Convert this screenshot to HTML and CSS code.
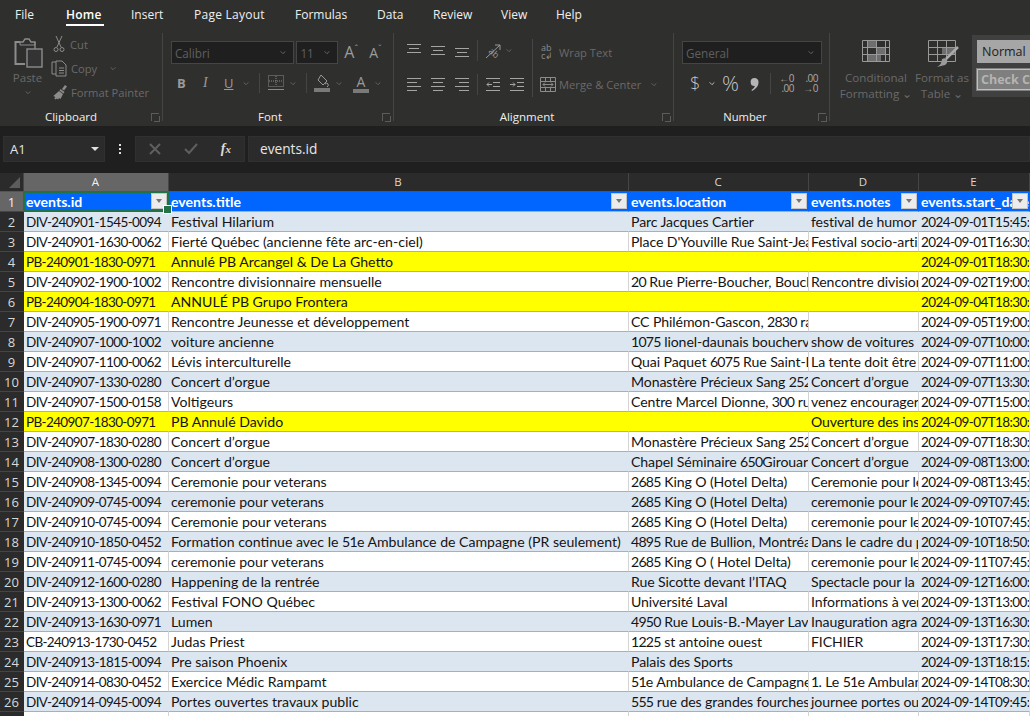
FILE: index.html
```html
<!DOCTYPE html>
<html lang="fr">
<head>
<meta charset="utf-8">
<title>events.xlsx</title>
<link rel="stylesheet" href="styles.css">
</head>
<body>
<div class="app">
  <nav class="tabs">
    <span class="tab t-file">File</span>
    <span class="tab t-home active">Home</span>
    <span class="tab t-insert">Insert</span>
    <span class="tab t-page">Page Layout</span>
    <span class="tab t-formulas">Formulas</span>
    <span class="tab t-data">Data</span>
    <span class="tab t-review">Review</span>
    <span class="tab t-view">View</span>
    <span class="tab t-help">Help</span>
  </nav>

  <section class="ribbon">
    <!-- Clipboard -->
    <div class="group g-clip">
      <div class="group-body clip-body">
        <div class="paste">
          <svg class="i-paste" width="30" height="32" viewBox="0 0 30 32" fill="none" stroke="#8c8c8c" stroke-width="1.4"><path d="M6 5H1.500v22H11" stroke-width="2"/><path d="M6 5h3l2-3h4l2 3h4v7"/><path d="M6 5v3h15V5" stroke-width="1"/><rect x="13" y="12" width="15" height="18" fill="#333"/></svg>
          <span class="dim">Paste</span>
          <svg class="chev" width="8" height="5" viewBox="0 0 8 5"><path d="M1 1l3 3 3-3" fill="none" stroke="#6f6f6f"/></svg>
        </div>
        <div class="clip-list">
          <div class="clip-row"><svg width="16" height="18" viewBox="0 0 16 18" fill="none" stroke="#8c8c8c"><path d="M5 1l5 11M11 1L6 12"/><circle cx="5" cy="14.500" r="2"/><circle cx="11" cy="14.500" r="2"/></svg><span class="dim">Cut</span></div>
          <div class="clip-row"><svg width="17" height="17" viewBox="0 0 17 17" fill="none" stroke="#8c8c8c"><path d="M5 2H1v12h4"/><path d="M5 1h6l4 4v11H5zM8 8h5M8 10.500h5M8 13h5"/></svg><span class="dim">Copy</span><svg class="chev c-copy" width="8" height="5" viewBox="0 0 8 5"><path d="M1 1l3 3 3-3" fill="none" stroke="#6f6f6f"/></svg></div>
          <div class="clip-row"><svg width="17" height="17" viewBox="0 0 17 17" fill="#8c8c8c"><path d="M11 5l3-4 2 1.500-3 4zM9.500 5l4 3-1 1.500-4-3zM8 7l4 3-2.500 5-1.500-1-.8 1.500-1.500-1-.9 1-1.500-1 1-1.500-2-1z"/></svg><span class="dim">Format Painter</span></div>
        </div>
      </div>
      <footer class="group-label l-clip">Clipboard<i class="launcher"></i></footer>
    </div>

    <!-- Font -->
    <div class="group g-font">
      <div class="group-body rows">
        <div class="row r-top">
          <div class="combo c-font"><span>Calibri</span><svg class="chev" width="8" height="5" viewBox="0 0 8 5"><path d="M1 1l3 3 3-3" fill="none" stroke="#777"/></svg></div>
          <div class="combo c-size"><span>11</span><svg class="chev" width="8" height="5" viewBox="0 0 8 5"><path d="M1 1l3 3 3-3" fill="none" stroke="#777"/></svg></div>
          <span class="grow-a">A<sup>ˆ</sup></span>
          <span class="grow-a small-a">A<sup>ˇ</sup></span>
        </div>
        <div class="row r-fmt">
          <b class="f-b">B</b><i class="f-i">I</i><u class="f-u">U</u>
          <svg class="chev c-u" width="8" height="5" viewBox="0 0 8 5"><path d="M1 1l3 3 3-3" fill="none" stroke="#6f6f6f"/></svg>
          <span class="vsep v-a"></span>
          <svg class="i-border" width="16" height="16" viewBox="0 0 16 16" fill="none" stroke="#8a8a8a"><path stroke-dasharray="1 1" d="M.5.500h15v11H.5zM8 1v10M1 6h14"/><path d="M0 14.500h16"/></svg>
          <svg class="chev c-b" width="8" height="5" viewBox="0 0 8 5"><path d="M1 1l3 3 3-3" fill="none" stroke="#6f6f6f"/></svg>
          <span class="vsep v-b"></span>
          <svg class="i-fill" width="16" height="18" viewBox="0 0 16 18"><path d="M7 1l6 6-4 4-5-5z" fill="none" stroke="#999"/><path d="M11 10q2-2 3 0t-1 3" fill="none" stroke="#999"/><rect y="14" width="16" height="4" fill="#7a7a7a"/></svg>
          <svg class="chev c-f" width="8" height="5" viewBox="0 0 8 5"><path d="M1 1l3 3 3-3" fill="none" stroke="#6f6f6f"/></svg>
          <span class="a-color">A</span>
          <svg class="chev c-a" width="8" height="5" viewBox="0 0 8 5"><path d="M1 1l3 3 3-3" fill="none" stroke="#6f6f6f"/></svg>
        </div>
      </div>
      <footer class="group-label l-font">Font<i class="launcher"></i></footer>
    </div>

    <!-- Alignment -->
    <div class="group g-align">
      <div class="group-body align-body">
        <div class="align-col">
          <div class="row align-row">
            <svg width="14" height="14" viewBox="0 0 14 14" stroke="#a5a5a5"><path d="M0 1.500h14M2 5.500h10M0 9.500h14"/></svg>
            <svg class="mid" width="14" height="14" viewBox="0 0 14 14" stroke="#a5a5a5"><path d="M0 3.500h14M2 7.500h10M0 11.500h14"/></svg>
            <svg class="mid low" width="14" height="14" viewBox="0 0 14 14" stroke="#a5a5a5"><path d="M0 5.500h14M2 9.500h10M0 13.500h14"/></svg>
            <span class="vsep v-c"></span>
            <svg class="i-orient" width="17" height="17" viewBox="0 0 17 17" fill="none" stroke="#9a9a9a"><text class="orient-t" x="0" y="0" transform="translate(3 10) rotate(40)">ab</text><path d="M1 16L15 3M10 3h5v5"/></svg>
            <svg class="chev c-o" width="8" height="5" viewBox="0 0 8 5"><path d="M1 1l3 3 3-3" fill="none" stroke="#6f6f6f"/></svg>
          </div>
          <div class="row align-row r-2">
            <svg width="14" height="14" viewBox="0 0 14 14" stroke="#a5a5a5"><path d="M0 1.500h14M0 5.500h10M0 9.500h14M0 13.500h10"/></svg>
            <svg class="mid" width="14" height="14" viewBox="0 0 14 14" stroke="#a5a5a5"><path d="M0 1.500h14M2 5.500h10M0 9.500h14M2 13.500h10"/></svg>
            <svg class="mid" width="14" height="14" viewBox="0 0 14 14" stroke="#a5a5a5"><path d="M0 1.500h14M4 5.500h10M0 9.500h14M4 13.500h10"/></svg>
            <span class="vsep v-c"></span>
            <svg class="i-ind" width="14" height="14" viewBox="0 0 14 14" fill="none" stroke="#a5a5a5"><path d="M0 1.500h14M7 5.500h7M7 9.500h7M0 13.500h14M1 7.500h5M3 5.500L1 7.500l2 2"/></svg>
            <svg class="i-ind2" width="14" height="14" viewBox="0 0 14 14" fill="none" stroke="#a5a5a5"><path d="M0 1.500h14M7 5.500h7M7 9.500h7M0 13.500h14M0 7.500h5M3 5.500l2 2-2 2"/></svg>
          </div>
        </div>
        <span class="vsep v-d"></span>
        <div class="wrap-col">
          <div class="clip-row w-row"><span class="abc">ab<br>c↲</span><span class="dim">Wrap Text</span></div>
          <div class="clip-row m-row"><svg width="16" height="16" viewBox="0 0 16 16" fill="none" stroke="#8c8c8c"><path d="M.5 1.500h15v14H.5zM.5 5.500h15M.5 11.500h15M5.500 1.500v4M10.500 1.500v4M5.500 11.500v4M10.500 11.500v4M3 8.500h10M5 6.500l-2 2 2 2M11 6.500l2 2-2 2"/></svg><span class="dim">Merge &amp; Center</span><svg class="chev c-m" width="8" height="5" viewBox="0 0 8 5"><path d="M1 1l3 3 3-3" fill="none" stroke="#6f6f6f"/></svg></div>
        </div>
      </div>
      <footer class="group-label l-align">Alignment<i class="launcher"></i></footer>
    </div>

    <!-- Number -->
    <div class="group g-num">
      <div class="group-body rows">
        <div class="row r-top"><div class="combo c-gen"><span>General</span><svg class="chev" width="8" height="5" viewBox="0 0 8 5"><path d="M1 1l3 3 3-3" fill="none" stroke="#777"/></svg></div></div>
        <div class="row r-num">
          <span class="n-dollar">$</span>
          <svg class="chev c-d" width="8" height="5" viewBox="0 0 8 5"><path d="M1 1l3 3 3-3" fill="none" stroke="#ddd"/></svg>
          <span class="n-pct">%</span>
          <svg class="n-comma" width="9" height="13" viewBox="0 0 9 13" fill="#b5b5b5"><path d="M4.500 0a4 4 0 0 1 4 4.500C8.500 8 6 11 2 13l-.6-1C3.500 10.500 4.500 9.300 4.800 8a3.800 3.800 0 1 1-.3-8z"/></svg>
          <span class="vsep v-n"></span>
          <span class="n-dec"><span>←0</span><span>.00</span></span>
          <span class="n-dec n-dec2"><span>.00</span><span>→0</span></span>
        </div>
      </div>
      <footer class="group-label l-num">Number<i class="launcher"></i></footer>
    </div>

    <!-- Styles -->
    <div class="g-styles">
      <div class="style-btn s-cond">
        <svg width="28" height="22" viewBox="0 0 28 22" fill="none" stroke="#999"><rect x="5" y="1" width="9" height="6" fill="#6e6e6e" stroke="none"/><rect x="14" y="7" width="9" height="7" fill="#6e6e6e" stroke="none"/><rect x="5" y="14" width="14" height="7" fill="#6e6e6e" stroke="none"/><path d="M.5.500h27v21H.5zM.5 7.500h27M.5 14.500h27M5.500 0v22M14.500 0v22M23.500 0v22"/></svg>
        <span class="dim">Conditional</span>
        <span class="dim">Formatting ⌄</span>
      </div>
      <div class="style-btn s-table">
        <svg width="31" height="28" viewBox="0 0 31 28" fill="none" stroke="#999"><rect x="14" y="8" width="13" height="7" fill="#6e6e6e" stroke="none"/><path d="M.5.500h27v21H.5zM.5 7.500h27M.5 14.500h27M9.500 0v22M18.500 0v22"/><path d="M30 7L18 19" stroke="#aaa" stroke-width="2.500"/><path d="M14 19q4-2 5 1t-2 5l-8 2q5-3 5-8z" fill="#9a9a9a" stroke="none"/></svg>
        <span class="dim">Format as</span>
        <span class="dim">Table ⌄</span>
      </div>
      <div class="gallery">
        <div class="st-normal">Normal</div>
        <div class="st-check">Check Cell</div>
      </div>
    </div>
  </section>

  <div class="strip"></div>

  <section class="formula-bar">
    <div class="namebox"><span>A1</span><i class="tri"></i></div>
    <div class="dots"><i></i><i></i><i></i></div>
    <div class="fx-btns">
      <svg width="14" height="12" viewBox="0 0 14 12" stroke="#5f5f5f" stroke-width="2"><path d="M2 1l10 10M12 1L2 11"/></svg>
      <svg width="14" height="12" viewBox="0 0 14 12" fill="none" stroke="#5f5f5f" stroke-width="2"><path d="M1 6l4 4 8-9"/></svg>
      <span class="fx">f<small>x</small></span>
    </div>
    <div class="formula">events.id</div>
  </section>

  <div class="strip2"></div>

  <section class="sheet">
    <table class="grid">
      <colgroup><col class="w-h"><col class="w-a"><col class="w-b"><col class="w-c"><col class="w-d"><col class="w-e"></colgroup>
      <thead>
        <tr class="cols">
          <th class="corner"><i></i></th><th class="cur">A</th><th>B</th><th>C</th><th>D</th><th>E</th>
        </tr>
      </thead>
      <tbody>
        <tr class="head">
          <th class="cur">1</th>
          <td class="sel"><div class="c">events.id</div><i class="fb"></i><i class="sel-box"></i></td>
          <td><div class="c">events.title</div><i class="fb"></i></td>
          <td><div class="c">events.location</div><i class="fb"></i></td>
          <td><div class="c">events.notes</div><i class="fb"></i></td>
          <td><div class="c">events.start_date</div><i class="fb"></i></td>
        </tr>
        <tr class="b"><th>2</th><td><div class="c">DIV-240901-1545-0094</div></td><td><div class="c">Festival Hilarium</div></td><td><div class="c">Parc Jacques Cartier</div></td><td><div class="c">festival de humor</div></td><td><div class="c">2024-09-01T15:45:00</div></td></tr>
        <tr><th>3</th><td><div class="c">DIV-240901-1630-0062</div></td><td><div class="c">Fierté Québec (ancienne fête arc-en-ciel)</div></td><td><div class="c">Place D'Youville Rue Saint-Jean</div></td><td><div class="c">Festival socio-artistique</div></td><td><div class="c">2024-09-01T16:30:00</div></td></tr>
        <tr class="y"><th>4</th><td><div class="c">PB-240901-1830-0971</div></td><td><div class="c">Annulé PB Arcangel &amp; De La Ghetto</div></td><td></td><td></td><td><div class="c">2024-09-01T18:30:00</div></td></tr>
        <tr><th>5</th><td><div class="c">DIV-240902-1900-1002</div></td><td><div class="c">Rencontre divisionnaire mensuelle</div></td><td><div class="c"><span class="n">20</span> Rue Pierre-Boucher, Boucherville</div></td><td><div class="c">Rencontre divisionnaire</div></td><td><div class="c">2024-09-02T19:00:00</div></td></tr>
        <tr class="y"><th>6</th><td><div class="c">PB-240904-1830-0971</div></td><td><div class="c">ANNULÉ PB Grupo Frontera</div></td><td></td><td></td><td><div class="c">2024-09-04T18:30:00</div></td></tr>
        <tr><th>7</th><td><div class="c">DIV-240905-1900-0971</div></td><td><div class="c">Rencontre Jeunesse et développement</div></td><td><div class="c">CC Philémon-Gascon, <span class="n">2830</span> rang</div></td><td></td><td><div class="c">2024-09-05T19:00:00</div></td></tr>
        <tr class="b"><th>8</th><td><div class="c">DIV-240907-1000-1002</div></td><td><div class="c">voiture ancienne</div></td><td><div class="c"><span class="n">1075</span> lionel-daunais boucherville</div></td><td><div class="c">show de voitures</div></td><td><div class="c">2024-09-07T10:00:00</div></td></tr>
        <tr><th>9</th><td><div class="c">DIV-240907-1100-0062</div></td><td><div class="c">Lévis interculturelle</div></td><td><div class="c">Quai Paquet <span class="n">6075</span> Rue Saint-Laurent</div></td><td><div class="c">La tente doit être</div></td><td><div class="c">2024-09-07T11:00:00</div></td></tr>
        <tr class="b"><th>10</th><td><div class="c">DIV-240907-1330-0280</div></td><td><div class="c">Concert d’orgue</div></td><td><div class="c">Monastère Précieux Sang <span class="n">2520</span></div></td><td><div class="c">Concert d’orgue</div></td><td><div class="c">2024-09-07T13:30:00</div></td></tr>
        <tr><th>11</th><td><div class="c">DIV-240907-1500-0158</div></td><td><div class="c">Voltigeurs</div></td><td><div class="c">Centre Marcel Dionne, <span class="n">300</span> rue</div></td><td><div class="c">venez encourager</div></td><td><div class="c">2024-09-07T15:00:00</div></td></tr>
        <tr class="y"><th>12</th><td><div class="c">PB-240907-1830-0971</div></td><td><div class="c">PB Annulé Davido</div></td><td></td><td><div class="c">Ouverture des inscriptions</div></td><td><div class="c">2024-09-07T18:30:00</div></td></tr>
        <tr><th>13</th><td><div class="c">DIV-240907-1830-0280</div></td><td><div class="c">Concert d’orgue</div></td><td><div class="c">Monastère Précieux Sang <span class="n">2520</span></div></td><td><div class="c">Concert d’orgue</div></td><td><div class="c">2024-09-07T18:30:00</div></td></tr>
        <tr class="b"><th>14</th><td><div class="c">DIV-240908-1300-0280</div></td><td><div class="c">Concert d’orgue</div></td><td><div class="c">Chapel Séminaire <span class="n">650</span>Girouard</div></td><td><div class="c">Concert d’orgue</div></td><td><div class="c">2024-09-08T13:00:00</div></td></tr>
        <tr><th>15</th><td><div class="c">DIV-240908-1345-0094</div></td><td><div class="c">Ceremonie pour veterans</div></td><td><div class="c"><span class="n">2685</span> King O (Hotel Delta)</div></td><td><div class="c">Ceremonie pour les</div></td><td><div class="c">2024-09-08T13:45:00</div></td></tr>
        <tr class="b"><th>16</th><td><div class="c">DIV-240909-0745-0094</div></td><td><div class="c">ceremonie pour veterans</div></td><td><div class="c"><span class="n">2685</span> King O (Hotel Delta)</div></td><td><div class="c">ceremonie pour les</div></td><td><div class="c">2024-09-09T07:45:00</div></td></tr>
        <tr><th>17</th><td><div class="c">DIV-240910-0745-0094</div></td><td><div class="c">Ceremonie pour veterans</div></td><td><div class="c"><span class="n">2685</span> King O (Hotel Delta)</div></td><td><div class="c">ceremonie pour les</div></td><td><div class="c">2024-09-10T07:45:00</div></td></tr>
        <tr class="b"><th>18</th><td><div class="c">DIV-240910-1850-0452</div></td><td><div class="c">Formation continue avec le <span class="n">51</span>e Ambulance de Campagne (PR seulement)</div></td><td><div class="c"><span class="n">4895</span> Rue de Bullion, Montréal</div></td><td><div class="c">Dans le cadre du plan</div></td><td><div class="c">2024-09-10T18:50:00</div></td></tr>
        <tr><th>19</th><td><div class="c">DIV-240911-0745-0094</div></td><td><div class="c">ceremonie pour veterans</div></td><td><div class="c"><span class="n">2685</span> King O ( Hotel Delta)</div></td><td><div class="c">ceremonie pour les</div></td><td><div class="c">2024-09-11T07:45:00</div></td></tr>
        <tr class="b"><th>20</th><td><div class="c">DIV-240912-1600-0280</div></td><td><div class="c">Happening de la rentrée</div></td><td><div class="c">Rue Sicotte devant l’ITAQ</div></td><td><div class="c">Spectacle pour la rentrée</div></td><td><div class="c">2024-09-12T16:00:00</div></td></tr>
        <tr><th>21</th><td><div class="c">DIV-240913-1300-0062</div></td><td><div class="c">Festival FONO Québec</div></td><td><div class="c">Université Laval</div></td><td><div class="c">Informations à venir</div></td><td><div class="c">2024-09-13T13:00:00</div></td></tr>
        <tr class="b"><th>22</th><td><div class="c">DIV-240913-1630-0971</div></td><td><div class="c">Lumen</div></td><td><div class="c"><span class="n">4950</span> Rue Louis-B.-Mayer Laval</div></td><td><div class="c">Inauguration agrandie</div></td><td><div class="c">2024-09-13T16:30:00</div></td></tr>
        <tr><th>23</th><td><div class="c">CB-240913-1730-0452</div></td><td><div class="c">Judas Priest</div></td><td><div class="c"><span class="n">1225</span> st antoine ouest</div></td><td><div class="c">FICHIER</div></td><td><div class="c">2024-09-13T17:30:00</div></td></tr>
        <tr class="b"><th>24</th><td><div class="c">DIV-240913-1815-0094</div></td><td><div class="c">Pre saison Phoenix</div></td><td><div class="c">Palais des Sports</div></td><td></td><td><div class="c">2024-09-13T18:15:00</div></td></tr>
        <tr><th>25</th><td><div class="c">DIV-240914-0830-0452</div></td><td><div class="c">Exercice Médic Rampamt</div></td><td><div class="c"><span class="n">51</span>e Ambulance de Campagne</div></td><td><div class="c"><span class="n">1</span>. Le <span class="n">51</span>e Ambulance</div></td><td><div class="c">2024-09-14T08:30:00</div></td></tr>
        <tr class="b"><th>26</th><td><div class="c">DIV-240914-0945-0094</div></td><td><div class="c">Portes ouvertes travaux public</div></td><td><div class="c"><span class="n">555</span> rue des grandes fourches</div></td><td><div class="c">journee portes ouvertes</div></td><td><div class="c">2024-09-14T09:45:00</div></td></tr>
        <tr><th></th><td></td><td></td><td></td><td></td><td></td></tr>
      </tbody>
    </table>
  </section>
</div>
</body>
</html>
```
FILE: styles.css
```css
* { box-sizing: border-box; }
html, body { margin: 0; padding: 0; }
body { width: 1030px; height: 716px; overflow: hidden; background: #262626; font-family: "Open Sans", "Noto Sans", sans-serif; }
.app { width: 1030px; height: 716px; overflow: hidden; display: flex; flex-direction: column; }

/* Tabs */
.tabs { height: 33px; background: #2f2f2e; display: flex; align-items: flex-start; padding-left: 15px; color: #efefef; font-size: 12px; }
.tab { height: 26px; line-height: 30px; white-space: nowrap; }
.tab.active { color: #fff; font-weight: 600; border-bottom: 2px solid #fff; letter-spacing: .2px; }
.t-file { width: 51px; }
.t-home { width: 38px; margin-right: 27px; }
.t-insert { width: 63px; }
.t-page { width: 101px; letter-spacing: .25px; }
.t-formulas { width: 82px; }
.t-data { width: 56px; }
.t-review { width: 68px; }
.t-view { width: 55px; }

/* Ribbon */
.ribbon { height: 93px; background: #2f2f2e; display: flex; overflow: hidden; }
.group { display: flex; flex-direction: column; flex: none; height: 93px; position: relative; }
.group::after { content: ""; position: absolute; right: 0; top: 0; width: 1px; height: 88px; background: #454545; }
.g-clip { width: 163px; }
.g-font { width: 231px; }
.g-align { width: 280px; }
.g-num { width: 156px; }
.group-body { flex: 1; min-height: 0; }
.group-label { height: 18px; text-align: center; color: #f0f0f0; font-size: 11.500px; line-height: 18px; }
.l-clip { padding-right: 21px; }
.l-font { padding-right: 17px; }
.l-align { padding-right: 14px; }
.l-num { padding-right: 14px; font-size: 11.200px; }
.launcher { position: absolute; right: 4px; bottom: 5px; width: 8px; height: 8px; border-left: 1px solid #5c5c5c; border-top: 1px solid #5c5c5c; }
.launcher::after { content: ""; position: absolute; left: 2px; top: 2px; width: 5px; height: 5px; border-right: 1px solid #5c5c5c; border-bottom: 1px solid #5c5c5c; }
.dim { color: #6a6a6a; font-size: 11.500px; white-space: nowrap; }
.chev { display: block; flex: none; transform: scale(.8); }

/* Clipboard */
.clip-body { display: flex; padding-left: 13px; }
.paste { width: 29px; display: flex; flex-direction: column; align-items: center; padding-top: 4px; }
.i-paste { margin: 0 -2px 1px 0; flex: none; }
.paste .dim { line-height: 15px; }
.paste .chev { margin-top: 5px; }
.clip-list { margin: -1px 0 0 9px; display: flex; flex-direction: column; }
.clip-list .dim { font-size: 11.200px; }
.clip-row { display: flex; align-items: center; height: 24px; gap: 3px; }
.clip-row svg:first-child { flex: none; }
.c-copy { margin-left: 9px; }

/* Rows */
.rows { padding-left: 8px; display: flex; flex-direction: column; }
.row { display: flex; align-items: center; }
.r-top { height: 23px; margin-top: 8px; }
.combo { height: 23px; background: #1f1f1f; border: 1px solid #454545; display: flex; align-items: center; justify-content: space-between; padding: 0 6px 0 3px; color: #5f5f5f; font-size: 11.700px; }
.c-font { width: 124px; margin-right: 2px; }
.c-size { width: 42px; margin-right: 6px; }
.c-gen { width: 140px; }
.grow-a { color: #9c9c9c; font-size: 16px; width: 25px; line-height: 23px; white-space: nowrap; }
.grow-a sup { font-size: 9px; line-height: 0; }
.small-a { font-size: 14px; }
.r-fmt { height: 22px; margin-top: 8px; padding-left: 6px; position: relative; color: #9a9a9a; font-size: 13px; }
.f-b { width: 23px; }
.f-i { width: 24px; padding-left: 3px; font-family: "Liberation Serif", serif; font-size: 14px; }
.f-u { width: 15px; font-size: 13px; }
.c-u { margin-left: 3px; }
.vsep { width: 1px; background: #454545; flex: none; display: block; }
.v-a { height: 20px; margin: 0 8px 0 9px; }
.c-b { margin-left: 5px; }
.v-b { height: 20px; margin: 0 7px 0 9px; }
.c-f { margin-left: 5px; }
.a-color { margin-left: 10px; width: 16px; text-align: center; color: #9a9a9a; font-size: 14px; line-height: 15px; border-bottom: 4px solid #7a7a7a; }
.c-a { margin-left: 5px; }

/* Alignment */
.align-body { display: flex; padding-left: 13px; }
.align-col { width: 125px; padding-top: 6px; }
.align-row { height: 22px; margin-bottom: 12px; }
.align-row .mid { margin-left: 10px; }
.v-c { height: 21px; margin: 0 7px 0 8px; }
.orient-t { font-size: 9px; fill: #9a9a9a; stroke: none; }
.c-o { margin-left: 3px; }
.i-ind { margin-left: 1px; }
.i-ind2 { margin-left: 10px; }
.v-d { height: 58px; margin-top: 6px; }
.wrap-col { padding: 8px 0 0 7px; display: flex; flex-direction: column; }
.wrap-col .dim { font-size: 11.200px; }
.w-row { height: 22px; margin-bottom: 10px; }
.m-row { height: 22px; }
.abc { width: 15px; margin-left: 1px; color: #8c8c8c; font-size: 9px; line-height: 8px; display: block; }
.c-m { margin-left: 6px; }

/* Number */
.r-num { height: 24px; margin-top: 7px; padding-left: 8px; color: #c4c4c4; position: relative; }
.n-dollar { font-size: 18px; font-weight: 300; width: 18px; }
.n-pct { font-size: 21px; font-weight: 300; margin-left: 6px; width: 28px; }
.n-comma { flex: none; width: 9px; margin: 3px 11px 0 0; }
.v-n { height: 21px; margin-right: 7px; }
.n-dec { display: flex; flex-direction: column; font-size: 10px; line-height: 10px; letter-spacing: -.5px; width: 16px; text-align: right; color: #aaa; }
.n-dec2 { margin-left: 8px; }

/* Styles */
.g-styles { display: flex; align-items: flex-start; flex: 1; min-width: 0; }
.style-btn { display: flex; flex-direction: column; align-items: center; padding-top: 7px; flex: none; }
.style-btn .dim { line-height: 16px; font-size: 11.600px; }
.s-cond { width: 72px; margin-left: 10px; }
.s-cond svg { margin-bottom: 8px; }
.s-table { width: 56px; margin-left: 2px; }
.s-table svg { margin-bottom: 2px; margin-left: 2px; }
.gallery { flex: 1; height: 62px; margin: 2px 0 0 2px; background: #404040; padding: 5px 0 0 5px; overflow: hidden; }
.st-normal { width: 70px; height: 23px; background: #a6a6a6; color: #1d1d1d; font-size: 12.500px; line-height: 23px; padding-left: 5px; white-space: nowrap; }
.st-check { width: 70px; height: 21px; margin-top: 6px; background: #7f7f7f; border: 1px solid #c0c0c0; outline: 1px solid #7f7f7f; color: #b4b4b4; font-size: 12.500px; font-weight: 700; line-height: 19px; padding-left: 3px; white-space: nowrap; }

/* Strips */
.strip { height: 8px; background: #1f1f1f; }
.strip2 { height: 11px; background: #1f1f1f; }

/* Formula bar */
.formula-bar { height: 28px; background: #1f1f1f; display: flex; padding: 2px 0 0 3px; align-items: stretch; }
.namebox { width: 102px; background: #2b2b2b; border: 1px solid #303030; display: flex; align-items: center; justify-content: space-between; padding: 0 5px 0 6px; color: #e6e6e6; font-size: 13px; }
.tri { width: 0; height: 0; border: 4px solid transparent; border-top: 4px solid #e0e0e0; border-bottom: 0; }
.dots { width: 30px; display: flex; flex-direction: column; align-items: center; justify-content: center; gap: 2px; }
.dots i { width: 2px; height: 2px; background: #e0e0e0; display: block; }
.fx-btns { width: 110px; background: #2b2b2b; border: 1px solid #303030; display: flex; align-items: center; justify-content: space-between; padding: 0 13px 0 12px; }
.fx { color: #ddd; font-family: "Liberation Serif", serif; font-style: italic; font-weight: 700; font-size: 14px; }
.fx small { font-size: 11px; }
.formula { flex: 1; margin-left: 3px; background: #2b2b2b; border: 1px solid #303030; color: #e6e6e6; font-size: 13.700px; line-height: 24px; padding-left: 11px; }

/* Sheet */
.sheet { flex: 1; overflow: hidden; background: #fff; }
.grid { border-collapse: separate; border-spacing: 0; table-layout: fixed; width: 1030px; font-family: Lato, "Liberation Sans", sans-serif; font-size: 14.100px; color: #141414; }
.w-h { width: 24px; } .w-a { width: 145px; } .w-b { width: 460px; } .w-c { width: 180px; } .w-d { width: 110px; } .w-e { width: 111px; }
.grid th { background: #2b2b2b; color: #d8d8d8; font-weight: 400; font-size: 13px; padding: 0 1px 0 0; text-align: center; overflow: hidden; }
.cols th { height: 19px; border-right: 1px solid #454545; border-bottom: 1px solid #555; font-family: "Open Sans", sans-serif; font-size: 11.500px; line-height: 18px; }
.corner { position: relative; }
.corner i { position: absolute; right: 3px; bottom: 3px; width: 0; height: 0; border-left: 11px solid transparent; border-bottom: 11px solid #5c5c5c; }
.grid th.cur { background: #666; color: #f0f0f0; }
tbody th { border-bottom: 1px solid #454545; font-family: "Open Sans", sans-serif; }
tbody tr { height: 20px; }
tbody td { height: 20px; padding: 0; border-right: 1px solid #d4d4d4; border-bottom: 1px solid #95b3d7; position: relative; overflow: hidden; background: #fff; }
tr.b td { background: #dce6f1; border-right-color: #dce6f1; }
tr.y td { background: #ff0; border-right-color: #ff0; }
.c { height: 19px; line-height: 19px; padding-left: 2px; white-space: nowrap; overflow: hidden; }
.n { letter-spacing: -.75px; }
tbody td:nth-child(4) .c, tbody td:nth-child(5) .c { letter-spacing: -.1px; }
tbody tr:not(.head) td:nth-child(2) .c { font-size: 13.500px; letter-spacing: -.63px; line-height: 21px; }
tbody tr:not(.head) td:nth-child(6) .c { font-size: 13.500px; letter-spacing: -.6px; line-height: 21px; }
tr.head td { background: #0066ff; color: #fff; font-weight: 700; border-right: 1px solid #0066ff; border-bottom: 1px solid #95b3d7; overflow: visible; }
tbody tr.head td .c { letter-spacing: 0; }
.fb { position: absolute; right: 1px; top: 1px; width: 16px; height: 16px; background: #ececec; border: 1px solid #c4c4c4; }
.fb::after { content: ""; position: absolute; left: 4px; top: 5px; border: 3.500px solid transparent; border-top: 4px solid #767676; border-bottom: 0; }
td.sel { z-index: 2; }
.sel-box { position: absolute; left: -1px; top: -1px; right: -1px; bottom: -1px; border: 2px solid #217346; pointer-events: none; }
.sel-box::after { content: ""; position: absolute; right: -5px; bottom: -4px; width: 7px; height: 7px; background: #217346; border: 1px solid #fff; }
```
